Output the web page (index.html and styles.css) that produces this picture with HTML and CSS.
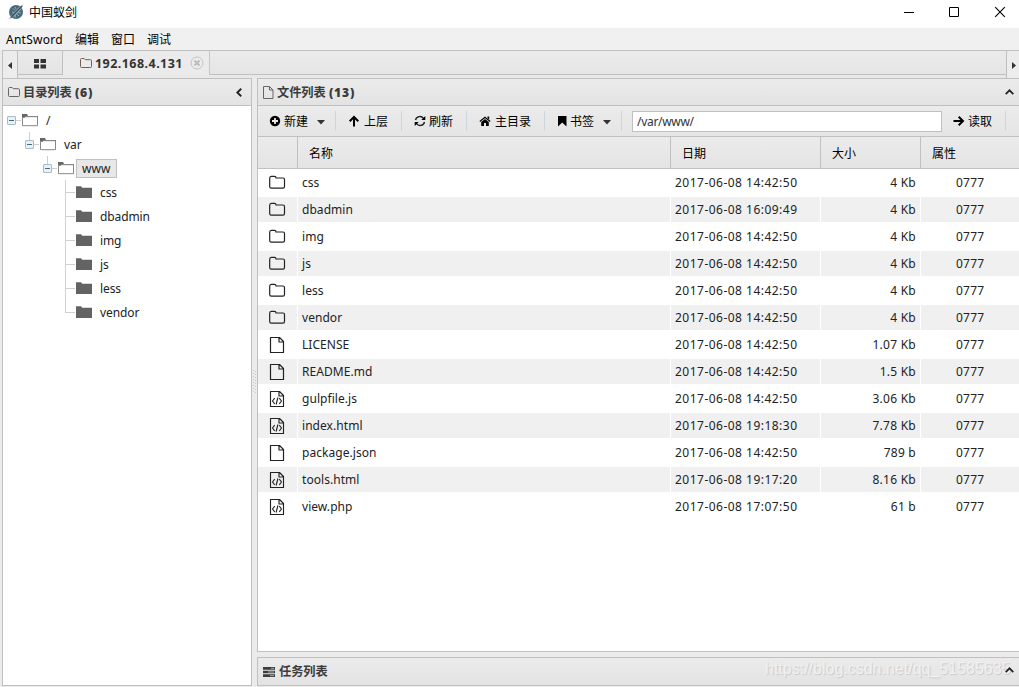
FILE: index.html
```html
<!DOCTYPE html>
<html lang="zh-CN">
<head>
<meta charset="utf-8">
<title>中国蚁剑</title>
<link rel="stylesheet" href="styles.css">
</head>
<body>
<svg class="defs" aria-hidden="true">
  <symbol id="folder-o" viewBox="0 0 18 16"><path d="M1.700 3.200c0-1 .6-1.900 1.600-1.900h3.200c1 0 1.500.7 1.500 1.700h7c1 0 1.500.7 1.500 1.600v7c0 1-.6 1.600-1.500 1.600H3.300c-1 0-1.600-.6-1.600-1.600z" fill="none" stroke="currentColor" stroke-width="1.200"/></symbol>
  <symbol id="file-o" viewBox="0 0 16 18"><path d="M1.500 1.500h9l4 4v11h-13zM10 1.500V6h4.500" fill="none" stroke="currentColor" stroke-width="1.200" stroke-linejoin="round"/></symbol>
  <symbol id="file-code" viewBox="0 0 16 18"><path d="M1.500 1.500h9l4 4v11h-13zM10 1.500V6h4.500M5.700 8.200L3.500 11l2.200 2.800M10.300 8.200l2.200 2.800-2.200 2.800M8.900 7.500l-1.800 7" fill="none" stroke="currentColor" stroke-width="1.150" stroke-linejoin="round"/></symbol>
  <symbol id="tree-open" viewBox="0 0 16 14"><path d="M0 1h5l1 2h10v3H0z" fill="#666"/><path d="M.5 4.500h2l1-.8h12v9H.5z" fill="#fff" stroke="#888"/></symbol>
  <symbol id="tree-closed" viewBox="0 0 16 14"><path d="M0 1.200h5l1.300 1.600H16V13H0z" fill="#636363"/></symbol>
  <symbol id="join-root" viewBox="0 0 18 24"><path d="M13 12.500h5" stroke="#d0d0d0"/><rect x="4.500" y="8.500" width="8" height="8" rx=".5" fill="#e9f1f5" stroke="#a9bcc6"/><path d="M6 12.500h5" stroke="#3e6c88"/></symbol>
  <symbol id="join-node" viewBox="0 0 18 24"><path d="M8.500 0v8M13 12.500h5" stroke="#d0d0d0"/><rect x="4.500" y="8.500" width="8" height="8" rx=".5" fill="#e9f1f5" stroke="#a9bcc6"/><path d="M6 12.500h5" stroke="#3e6c88"/></symbol>
  <symbol id="join-mid" viewBox="0 0 18 24"><path d="M8.500 0v24M9 12.500h9" stroke="#d0d0d0"/></symbol>
  <symbol id="join-end" viewBox="0 0 18 24"><path d="M8.500 0v13M9 12.500h9" stroke="#d0d0d0" fill="none"/></symbol>
  <symbol id="caret" viewBox="0 0 8 5"><path d="M0 0h8L4 4.500z" fill="#333"/></symbol>
</svg>

<header class="titlebar">
  <svg class="logo" viewBox="0 0 16 16"><circle cx="8" cy="8" r="7" fill="#496a7b"/><path d="M15.500.2L10 4 4 11 .5 15.800 7 12l5.500-6z" fill="#99a9b1"/><path d="M5 4.500l2 2M4 8l2 .5M9 10l2 2M10 8l3 1M7 3l1 2M7 11l.5 2.500" stroke="#a5b8c0" stroke-width=".8"/><path d="M14 2L3 13.500" stroke="#2f4d60" stroke-width="1.200"/></svg>
  <span class="app-name">中国蚁剑</span>
  <svg class="winbtn" viewBox="0 0 46 28"><path d="M18 12.500h10" stroke="#000"/></svg>
  <svg class="winbtn" viewBox="0 0 46 28"><path d="M17.500 7.500h9v9h-9z" fill="none" stroke="#000"/></svg>
  <svg class="winbtn" viewBox="0 0 46 28"><path d="M17.200 7.200l9.600 9.600M26.800 7.200l-9.600 9.600" stroke="#000" stroke-width="1.100"/></svg>
</header>

<nav class="menubar"><span class="menu-ant">AntSword</span><span>编辑</span><span>窗口</span><span>调试</span></nav>

<div class="tabbar">
  <div class="scroll left"><svg viewBox="0 0 4 7"><path d="M4 0v7L0 3.500z" fill="#333"/></svg></div>
  <div class="tab home"><svg viewBox="0 0 12 10"><path d="M0 0h5v4H0zM6.500 0H12v4H6.500zM0 5.500h5v4H0zM6.500 5.500H12v4H6.500z" fill="#333"/></svg></div>
  <div class="tab active">
    <svg class="tab-folder" viewBox="0 0 12 10"><path d="M.5 1.500q0-1 1-1h2.700l1 1.200h5.300q1 0 1 1v5.800q0 1-1 1h-9q-1 0-1-1z" fill="none" stroke="#775f50"/></svg>
    <span class="tab-label">192.168.4.131</span>
    <svg class="tab-close" viewBox="0 0 14 14"><circle cx="7" cy="7" r="6" fill="none" stroke="#c4c4c4"/><path d="M4.500 4.500l5 5M9.500 4.500l-5 5" stroke="#bdbdbd" stroke-width="2"/></svg>
  </div>
  <div class="tab-rest"></div>
  <div class="scroll right"><svg viewBox="0 0 4 7"><path d="M0 0v7l4-3.500z" fill="#333"/></svg></div>
</div>

<main class="workspace">
  <section class="panel tree-panel">
    <h2 class="panel-head">
      <svg class="head-folder" viewBox="0 0 12 10"><path d="M.5 1.500q0-1 1-1h2.700l1 1.200h5.300q1 0 1 1v5.800q0 1-1 1h-9q-1 0-1-1z" fill="none" stroke="#666"/></svg>
      <span>目录列表 <b>(6)</b></span>
      <svg class="chev-left" viewBox="0 0 6 9"><path d="M5.200.7L1.300 4.500l3.900 3.800" fill="none" stroke="#222" stroke-width="1.900"/></svg>
    </h2>
    <div class="tree">
      <div class="node l0"><svg class="join"><use href="#join-root"/></svg><svg class="tf"><use href="#tree-open"/></svg><span>/</span></div>
      <div class="node l1"><svg class="join"><use href="#join-node"/></svg><svg class="tf"><use href="#tree-open"/></svg><span>var</span></div>
      <div class="node l2"><svg class="join"><use href="#join-node"/></svg><svg class="tf"><use href="#tree-open"/></svg><span class="selected">www</span></div>
      <div class="node l3"><svg class="join"><use href="#join-mid"/></svg><svg class="tf"><use href="#tree-closed"/></svg><span>css</span></div>
      <div class="node l3"><svg class="join"><use href="#join-mid"/></svg><svg class="tf"><use href="#tree-closed"/></svg><span>dbadmin</span></div>
      <div class="node l3"><svg class="join"><use href="#join-mid"/></svg><svg class="tf"><use href="#tree-closed"/></svg><span>img</span></div>
      <div class="node l3"><svg class="join"><use href="#join-mid"/></svg><svg class="tf"><use href="#tree-closed"/></svg><span>js</span></div>
      <div class="node l3"><svg class="join"><use href="#join-mid"/></svg><svg class="tf"><use href="#tree-closed"/></svg><span>less</span></div>
      <div class="node l3"><svg class="join"><use href="#join-end"/></svg><svg class="tf"><use href="#tree-closed"/></svg><span>vendor</span></div>
    </div>
  </section>
  <div class="splitter"><svg viewBox="0 0 3 24"><path d="M.5 0v24M2.500 1v24" stroke="#c8c8c8" stroke-dasharray="1 2"/></svg></div>
  <div class="right-col">
    <section class="panel files-panel">
      <h2 class="panel-head">
        <svg class="head-file" viewBox="0 0 11 13"><path d="M.5.500h6l3.500 3.500v8.500H.5zM6.500.5V4H10" fill="none" stroke="#666"/></svg>
        <span>文件列表 <b>(13)</b></span>
        <svg class="chev-up" viewBox="0 0 9 6"><path d="M.7 5.200l3.800-3.900 3.800 3.900" fill="none" stroke="#222" stroke-width="1.700"/></svg>
      </h2>
      <div class="toolbar">
        <button class="tool t-new"><svg viewBox="0 0 12 12"><circle cx="6" cy="6" r="5.200"/><path d="M6 3v6M3 6h6" stroke="#ececec" stroke-width="1.800"/></svg><span>新建</span><svg class="caret"><use href="#caret"/></svg></button>
        <button class="tool t-up"><svg viewBox="0 0 12 12"><path d="M6 11.500V3M1.700 6.300L6 2l4.300 4.300" fill="none" stroke="#000" stroke-width="2"/></svg><span>上层</span></button>
        <button class="tool t-refresh"><svg viewBox="0 0 12 12"><path d="M1.500 5A4.500 4.500 0 0 1 9.500 3.300M10.500 7A4.500 4.500 0 0 1 2.500 8.700" fill="none" stroke="#222" stroke-width="1.400"/><path d="M11.300 1v4H7.300zM.7 11V7h4z"/></svg><span>刷新</span></button>
        <button class="tool t-home"><svg viewBox="0 0 12 12"><path d="M.8 6.500L6 2.200l5.200 4.300" fill="none" stroke="#000" stroke-width="1.200"/><path d="M8.500 1.500h1.700v3l-1.700-1.400zM2.200 7L6 3.900 9.800 7v4H7V8H5v3H2.200z"/></svg><span>主目录</span></button>
        <button class="tool t-mark"><svg viewBox="0 0 12 12"><path d="M2 1h8.500v10.500L6.200 7.600 2 11.500z"/></svg><span>书签</span><svg class="caret"><use href="#caret"/></svg></button>
        <input class="path" value="/var/www/">
        <button class="tool t-read"><svg viewBox="0 0 12 12"><path d="M.5 6H9M5.700 1.700L10 6l-4.300 4.300" fill="none" stroke="#000" stroke-width="2"/></svg><span>读取</span></button>
      </div>
      <div class="grid-row grid-head"><span></span><span>名称</span><span>日期</span><span>大小</span><span>属性</span></div>
      <div class="grid-body">
        <div class="grid-row"><span><svg class="gi"><use href="#folder-o"/></svg></span><span>css</span><span>2017-06-08 14:42:50</span><span>4 Kb</span><span>0777</span></div>
        <div class="grid-row"><span><svg class="gi"><use href="#folder-o"/></svg></span><span>dbadmin</span><span>2017-06-08 16:09:49</span><span>4 Kb</span><span>0777</span></div>
        <div class="grid-row"><span><svg class="gi"><use href="#folder-o"/></svg></span><span>img</span><span>2017-06-08 14:42:50</span><span>4 Kb</span><span>0777</span></div>
        <div class="grid-row"><span><svg class="gi"><use href="#folder-o"/></svg></span><span>js</span><span>2017-06-08 14:42:50</span><span>4 Kb</span><span>0777</span></div>
        <div class="grid-row"><span><svg class="gi"><use href="#folder-o"/></svg></span><span>less</span><span>2017-06-08 14:42:50</span><span>4 Kb</span><span>0777</span></div>
        <div class="grid-row"><span><svg class="gi"><use href="#folder-o"/></svg></span><span>vendor</span><span>2017-06-08 14:42:50</span><span>4 Kb</span><span>0777</span></div>
        <div class="grid-row"><span><svg class="gi"><use href="#file-o"/></svg></span><span>LICENSE</span><span>2017-06-08 14:42:50</span><span>1.07 Kb</span><span>0777</span></div>
        <div class="grid-row"><span><svg class="gi"><use href="#file-o"/></svg></span><span>README.md</span><span>2017-06-08 14:42:50</span><span>1.5 Kb</span><span>0777</span></div>
        <div class="grid-row"><span><svg class="gi"><use href="#file-code"/></svg></span><span>gulpfile.js</span><span>2017-06-08 14:42:50</span><span>3.06 Kb</span><span>0777</span></div>
        <div class="grid-row"><span><svg class="gi"><use href="#file-code"/></svg></span><span>index.html</span><span>2017-06-08 19:18:30</span><span>7.78 Kb</span><span>0777</span></div>
        <div class="grid-row"><span><svg class="gi"><use href="#file-o"/></svg></span><span>package.json</span><span>2017-06-08 14:42:50</span><span>789 b</span><span>0777</span></div>
        <div class="grid-row"><span><svg class="gi"><use href="#file-code"/></svg></span><span>tools.html</span><span>2017-06-08 19:17:20</span><span>8.16 Kb</span><span>0777</span></div>
        <div class="grid-row"><span><svg class="gi"><use href="#file-code"/></svg></span><span>view.php</span><span>2017-06-08 17:07:50</span><span>61 b</span><span>0777</span></div>
      </div>
    </section>
    <section class="panel tasks-panel">
      <h2 class="panel-head">
        <svg class="head-tasks" viewBox="0 0 12 10"><path d="M0 0h12v2.700H0zM0 3.700h12v2.600H0zM0 7.300h12V10H0z" fill="#3c3c3c"/><path d="M8 1.300h3M5 5h6M7 8.700h4" stroke="#aaa"/></svg>
        <span>任务列表</span>
        <svg class="chev-up" viewBox="0 0 9 6"><path d="M.7 5.200l3.800-3.900 3.800 3.900" fill="none" stroke="#222" stroke-width="1.700"/></svg>
      </h2>
      <div class="watermark">https://blog.csdn.net/qq_51585635</div>
    </section>
  </div>
</main>
</body>
</html>
```
FILE: styles.css
```css
* { box-sizing: border-box; }
body {
  margin: 0; width: 1019px; height: 687px; overflow: hidden;
  display: flex; flex-direction: column; background: #ebebeb; color: #222;
  font: 12px "Noto Sans", "Noto Sans CJK SC", sans-serif;
}
svg { display: block; flex: none; }
.defs { position: absolute; width: 0; height: 0; }

.titlebar { height: 28px; flex: none; display: flex; background: #fff; }
.logo { width: 16px; height: 16px; margin: 4px 5px 0 8px; }
.app-name { flex: 1; line-height: 26px; color: #000; }
.winbtn { width: 46px; height: 28px; }
.winbtn:last-child { margin-right: -5px; }

.menubar { height: 22px; flex: none; display: flex; gap: 12px; padding-left: 6px; line-height: 23px; background: #f0f0f0; color: #000; }
.menu-ant { width: 57px; letter-spacing: .25px; }

.tabbar { height: 28px; flex: none; display: flex; margin-left: 2px; border-top: 1px solid #c0c0c0; border-left: 1px solid #c0c0c0; background: #e8e8e8; }
.scroll { height: 27px; display: flex; align-items: center; background: #ececec; }
.scroll svg { width: 4px; height: 7px; margin-top: 2px; }
.scroll.left { width: 15px; padding-left: 5px; border-right: 1px solid #c0c0c0; }
.scroll.right { width: 13px; padding-left: 5px; border-left: 1px solid #c0c0c0; }
.tab { height: 24px; display: flex; align-items: center; border-right: 1px solid #c0c0c0; }
.home { width: 45px; padding-left: 16px; height: 24px; border-bottom: 1px solid #c0c0c0; background: linear-gradient(#eaeaea, #e4e4e4); }
.home svg { width: 12px; height: 10px; margin-top: 2px; }
.active { width: 147px; padding-left: 17px; background: #ebebeb; border-right-color: #c6c6c6; }
.tab-folder { width: 12px; height: 10px; margin-right: 3px; }
.tab-label { width: 95px; font-weight: 700; font-size: 12.500px; letter-spacing: .45px; line-height: 24px; padding-top: 1px; color: #333; }
.tab-close { width: 14px; height: 14px; }
.tab-rest { flex: 1; height: 24px; border-bottom: 1px solid #c0c0c0; background: linear-gradient(#ebebeb, #e5e5e5); }

.workspace { flex: 1; min-height: 0; display: grid; grid-template-columns: 250px 5px 1fr; padding-left: 2px; height: 608px; }
.panel { border: 1px solid #c0c0c0; background: #fff; }
.panel-head {
  height: 27px; margin: 0; padding: 0 9px 0 5px; display: flex; align-items: center;
  border-bottom: 1px solid #c0c0c0; background: linear-gradient(#ebebeb, #e3e3e3);
  font-size: 12.200px; font-weight: 700; color: #3c3c3c; line-height: 26px;
}
.panel-head span { flex: 1; padding-top: 1px; }
.panel-head b { letter-spacing: .8px; }
.head-folder { width: 12px; height: 10px; margin-right: 3px; }
.head-file { width: 11px; height: 13px; margin-right: 3px; }
.head-tasks { width: 12px; height: 10px; margin-right: 4px; }
.chev-left { width: 6px; height: 9px; margin-top: 1px; }
.chev-up { width: 9px; height: 6px; }
.tree-panel { height: 608px; }
.tree { padding-top: 2px; }
.node { height: 24px; display: flex; align-items: center; color: #222; }
.l1 { padding-left: 18px; }
.l2 { padding-left: 36px; }
.l3 { padding-left: 54px; }
.join { width: 18px; height: 24px; margin-right: 1px; }
.tf { width: 16px; height: 14px; }
.node span { height: 19px; margin: 1px 0 0 2px; padding: 0 5px; border: 1px solid transparent; line-height: 17px; letter-spacing: -.1px; }
.node .selected { background: #e7e7e7; border-color: #c0c0c0; letter-spacing: .1px; }
.splitter { padding: 292px 0 0 1px; }
.splitter svg { width: 3px; height: 24px; }

.right-col { display: flex; flex-direction: column; gap: 5px; min-width: 0; height: 608px; }
.files-panel { height: 574px; flex: none; border-right: 0; }
.files-panel .panel-head, .tasks-panel .panel-head { padding-right: 5px; }
.toolbar { height: 31px; display: flex; align-items: center; border-bottom: 1px solid #c0c0c0; background: linear-gradient(#ebebeb, #e5e5e5); }
.tool { height: 20px; display: flex; align-items: center; flex: none; padding: 0 0 0 11px; border: 0; border-right: 1px solid #c9d6db; background: none; font: inherit; color: #000; line-height: 20px; }
.tool span { padding-top: 1px; }
.tool svg { width: 12px; height: 12px; margin-right: 3px; }
.tool .caret { width: 8px; height: 5px; margin: 2px 0 0 9px; }
.t-new { width: 78px; }
.t-up { width: 66px; padding-left: 12px; }
.t-up svg { margin-right: 4px; }
.t-refresh { width: 65px; padding-left: 12px; }
.t-home { width: 78px; padding-left: 12px; }
.t-home svg { margin-right: 4px; }
.t-mark { width: 77px; padding-left: 11px; }
.t-mark svg:first-child { margin-right: 2px; }
.path { width: 310px; height: 21px; margin: 0 0 0 10px; padding: 1px 4px 0; border: 1px solid #c0c0c0; background: #fff; font: inherit; color: #333; outline: 0; letter-spacing: -.3px; }
.t-read { width: 64px; }

.grid-row { display: grid; grid-template-columns: 40px 373px 150px 100px 1fr; height: 27px; }
.grid-row > span { border: solid #fff; border-width: 1px 1px 1px 0; line-height: 25px; padding-left: 4px; white-space: nowrap; }
.grid-row > span:last-child { border-right: 0; padding-left: 35px; }
.grid-row:nth-child(even) > span { background: #f0f0f0; }
.grid-body .grid-row > span:first-child { display: flex; align-items: center; padding-left: 10px; }
.grid-body .grid-row > span:nth-child(2) { letter-spacing: .05px; }
.grid-body .grid-row > span:nth-child(3) { letter-spacing: .48px; }
.grid-body .grid-row > span:nth-child(4) { text-align: right; padding-right: 4px; letter-spacing: .25px; }
.grid-body .grid-row > span:nth-child(5) { letter-spacing: .2px; }
.gi { width: 18px; height: 18px; color: #222; }
.grid-row.grid-head { height: 32px; border-bottom: 1px solid #c0c0c0; background: linear-gradient(#ebebeb, #e4e4e4); color: #000; }
.grid-row.grid-head > span { background: none; border: 0; border-right: 1px solid #c0c0c0; line-height: 34px; height: 31px; padding-left: 11px; }
.grid-row.grid-head > span:last-child { border-right: 0; padding-left: 11px; }
.tasks-panel { position: relative; height: 29px; flex: none; border-right: 0; }
.tasks-panel .panel-head { border-bottom: 0; }
.tasks-panel .chev-up { position: relative; z-index: 1; margin-top: -4px; }
.watermark { position: absolute; left: 507px; top: 1px; font: 16px/20px "Liberation Sans", sans-serif; color: #f1f1f1; text-shadow: 1px 1px 1px #c8c8c8; white-space: nowrap; }
```
